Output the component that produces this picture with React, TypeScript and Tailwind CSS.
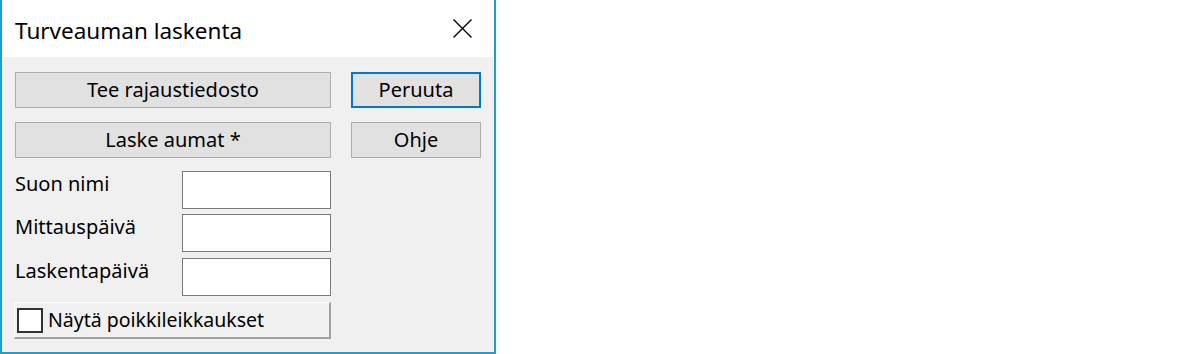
import React from "react";

function CloseIcon() {
  return (
    <svg width="19" height="19" viewBox="0 0 19 19" className="block">
      <path d="M0.5 0.5 L18.5 18.5 M18.5 0.5 L0.5 18.5" stroke="#000" strokeWidth="1.4" />
    </svg>
  );
}

const font = { fontFamily: '"Noto Sans", "Open Sans", sans-serif' };

function Btn({ children, primary }: { children: React.ReactNode; primary?: boolean }) {
  return (
    <div
      className={
        "h-[36px] flex items-center justify-center bg-[#e1e1e1] text-[20px] text-black " +
        (primary ? "border-2 border-[#0078d7]" : "border border-[#adadad]")
      }
    >
      {children}
    </div>
  );
}

function Field({ label }: { label: string }) {
  return (
    <div className="flex items-start h-[38px]">
      <div className="w-[167px] text-[20px] leading-[24px] pt-[1px] text-black">{label}</div>
      <div className="w-[149px] h-[38px] bg-white border border-[#7a7a7a]" />
    </div>
  );
}

export default function App() {
  return (
    <div className="w-[1200px] h-[354px] bg-white flex" style={font}>
      <div className="w-[496px] h-[354px] flex flex-col border-l-2 border-r-2 border-b-2 border-[#1aa1c3]">
        <div className="h-[57px] bg-white flex items-center justify-between pl-[13px] pr-[22px]">
          <span className="text-[22.5px] text-black pt-[4px]">Turveauman laskenta</span>
          <CloseIcon />
        </div>
        <div className="flex-1 bg-[#f0f0f0] flex pl-[13px] pt-[15px] gap-[20px]">
          <div className="w-[316px] flex flex-col">
            <Btn>Tee rajaustiedosto</Btn>
            <div className="h-[14px]" />
            <Btn>Laske aumat *</Btn>
            <div className="h-[13px]" />
            <Field label="Suon nimi" />
            <div className="h-[5px]" />
            <Field label="Mittauspäivä" />
            <div className="h-[6px]" />
            <Field label="Laskentapäivä" />
            <div className="h-[6px]" />
            <div className="h-[37px] -ml-[1px] flex items-center bg-[#f0f0f0] border-t border-l border-white border-r-2 border-b-2 border-r-[#a0a0a0] border-b-[#a0a0a0]">
              <div className="ml-[2px] w-[26px] h-[25px] bg-white border-2 border-[#333333]" />
              <span className="ml-[5px] text-[19.5px] text-black">Näytä poikkileikkaukset</span>
            </div>
          </div>
          <div className="w-[130px] flex flex-col gap-[14px]">
            <Btn primary>Peruuta</Btn>
            <Btn>Ohje</Btn>
          </div>
        </div>
      </div>
    </div>
  );
}
